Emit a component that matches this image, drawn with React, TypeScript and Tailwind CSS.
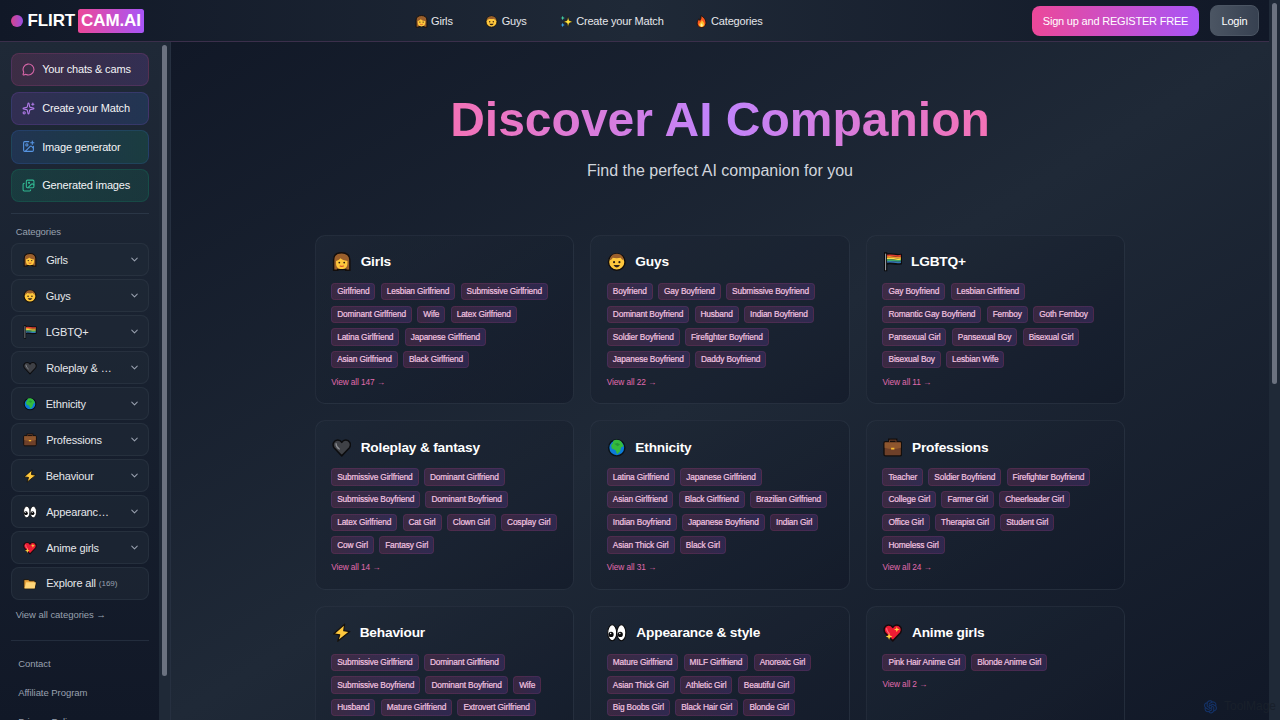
import React from 'react';
import { ChevronDown, ImagePlus, Images, MessageCircle, Sparkles } from 'lucide-react';
import { AiOutlineOpenAI } from 'react-icons/ai';

type Glyph =
  | 'woman' | 'man' | 'flag' | 'heart' | 'globe' | 'case' | 'bolt' | 'eyes' | 'sparkheart' | 'folder' | 'sparkles' | 'fire';

const drawings: Record<Glyph, React.ReactNode> = {
  woman: (
    <>
      <path d="M2 22.500V9.500C2 4 6 1 12 1s10 3 10 8.500v13h-5v-1H7v1Z" fill="#9a5f2c" stroke="#130e0c" strokeWidth="1.800" />
      <path d="M5 11c2-.4 4.500-1.700 5.500-3.200C12.300 9.400 15 10.800 19 11v3c0 5-3 7-7 7s-7-2-7-7Z" fill="#ffc83d" />
      <circle cx="9" cy="13" r="1.100" fill="#2a1a10" /><circle cx="15" cy="13" r="1.100" fill="#2a1a10" />
      <path d="M9.500 17q2.500 1.600 5 0" stroke="#d6502c" strokeWidth="1.500" fill="none" />
    </>
  ),
  man: (
    <>
      <circle cx="12" cy="12.300" r="10.200" fill="#ffc83d" stroke="#130e0c" strokeWidth="1.800" />
      <path d="M3.500 10C4 5 7 2.200 12 2.200S20 5 20.500 10c-2-.6-3-1.500-3.500-3-3 .8-7 .8-10 0C6.500 8.500 5.500 9.500 3.500 10Z" fill="#9a5f2c" />
      <circle cx="8.700" cy="12.500" r="1.300" fill="#2a1a10" /><circle cx="15.300" cy="12.500" r="1.300" fill="#2a1a10" />
      <path d="M8 16h8q-1.500 3-4 3t-4-3Z" fill="#33231a" />
    </>
  ),
  flag: (
    <>
      <path d="M2 1v22h2.500V15c4-2 10 1 18-.5V3C16 4.500 10 1 4.500 2.500V1Z" fill="#111" stroke="#0b0b0d" strokeWidth="1.500" />
      <path d="M5 4.300c6-1.500 10 1.700 17 .2" stroke="#e03c31" strokeWidth="2" fill="none" />
      <path d="M5 6.300c6-1.500 10 1.700 17 .2" stroke="#f7902d" strokeWidth="2" fill="none" />
      <path d="M5 8.300c6-1.500 10 1.700 17 .2" stroke="#f5df4d" strokeWidth="2" fill="none" />
      <path d="M5 10.300c6-1.500 10 1.700 17 .2" stroke="#3fa66b" strokeWidth="2" fill="none" />
      <path d="M5 12.300c6-1.500 10 1.700 17 .2" stroke="#3475b5" strokeWidth="2" fill="none" />
      <path d="M3.200 2v20.500" stroke="#a5aab2" strokeWidth="1.200" />
    </>
  ),
  heart: (
    <>
      <path d="M12 22 2.500 12C-.5 7 3 2.500 7 2.500c2.200 0 4 1.200 5 3 1-1.800 2.800-3 5-3 4 0 7.500 4.500 4.500 9.500Z" fill="#3f4146" stroke="#0c0c0e" strokeWidth="1.800" strokeLinejoin="round" />
      <path d="M5 7q0 4 4 6.500" stroke="#8b8d92" strokeWidth="1.600" fill="none" strokeLinecap="round" />
    </>
  ),
  globe: (
    <>
      <circle cx="12" cy="12" r="10" fill="#0d7bd8" stroke="#0b1116" strokeWidth="1.800" />
      <path d="M8 3c3-1.500 8-1 10 2l2.500 5-3 1.500-1.500 5-3.500 3.500-2-5-4.500-2-1-4 2-2.500Z" fill="#35bb3d" />
      <path d="m9 7 4-1 3 2-3 2Z" fill="#25983a" />
    </>
  ),
  case: (
    <>
      <path d="M8 5V2.500h8V5" fill="none" stroke="#130e0c" strokeWidth="3.500" />
      <rect x="1.200" y="4.500" width="21.600" height="17.500" rx="2" fill="#6e4029" stroke="#130e0c" strokeWidth="1.700" />
      <path d="M8 5V2.700h8V5" fill="none" stroke="#6e4029" strokeWidth="1.200" />
      <path d="M2 5.500h20V12q-10 3-20 0Z" fill="#8e562e" /><rect x="10" y="12" width="4" height="2.200" fill="#f7b92f" />
    </>
  ),
  bolt: <path d="M15.500 1.500 2 13.500l7.500 1L7 22.500 22 10.500 14.500 9.500Z" fill="#ffc83d" stroke="#15110d" strokeWidth="1.500" strokeLinejoin="round" />,
  eyes: (
    <>
      <ellipse cx="6.400" cy="12" rx="5.500" ry="9.800" fill="#fff" stroke="#08080a" strokeWidth="1.300" />
      <ellipse cx="17.700" cy="12" rx="5.500" ry="9.800" fill="#fff" stroke="#08080a" strokeWidth="1.300" />
      <circle cx="5" cy="14" r="3.200" fill="#09090b" /><circle cx="16.300" cy="14" r="3.200" fill="#09090b" />
      <circle cx="4.500" cy="12.800" r=".9" fill="#fff" /><circle cx="15.800" cy="12.800" r=".9" fill="#fff" />
    </>
  ),
  sparkheart: (
    <>
      <path d="M12 22 2.500 12C-.5 7 3 2.500 7 2.500c2.200 0 4 1.200 5 3 1-1.800 2.800-3 5-3 4 0 7.500 4.500 4.500 9.500Z" fill="#ec1c34" stroke="#160a0c" strokeWidth="1.800" strokeLinejoin="round" />
      <path d="M4.500 7q0 3 3 6" stroke="#ff6877" strokeWidth="1.600" fill="none" strokeLinecap="round" />
      <path d="m17 4.500.9 2.600 2.600.9-2.600.9L17 11.500l-.9-2.600-2.600-.9 2.600-.9ZM7.500 12.500l1.100 3 3 1.100-3 1.100-1.100 3-1.100-3-3-1.100 3-1.100Z" fill="#ffd23d" />
    </>
  ),
  folder: (
    <>
      <path d="M1.500 20V4.500h8L11 6.500h9.500V10h2L20.500 20Z" fill="#e9a33b" stroke="#15110d" strokeWidth="1.500" strokeLinejoin="round" />
      <path d="M2.500 19.500 5.500 9H22l-2 10.500Z" fill="#ffd679" />
    </>
  ),
  sparkles: (
    <>
      <path d="m15 3 2 7 6.500 2.500L17 15l-2 7-2-7-6.500-2.500L13 10Z" fill="#ffe23d" stroke="#15130d" strokeWidth="1" />
      <path d="m5 1.500 1.200 3L9 5.500 6.200 6.500 5 9.500l-1.200-3L1 5.500l2.800-1Z" fill="#46d4a5" />
      <path d="m5 14.500 1.200 3 2.800 1-2.800 1L5 22.500l-1.200-3-2.800-1 2.800-1Z" fill="#39a5e8" />
    </>
  ),
  fire: (
    <>
      <path d="M11 1c5 3 10 8 9 15-.7 4.500-4 7-8 7s-8-3-8-8c0-3.500 2-5 3-8l2 3c2-2.500 2.500-5 2-9Z" fill="#f9591f" stroke="#180d0a" strokeWidth="1.500" />
      <path d="M12.500 9c0 3-4 5-5 8 0 3.500 2 5 4.700 5s5-2 5-5-2.200-4-4.700-8Z" fill="#ffc12d" />
      <path d="M12 15q-2.500 3-2 4.500 1 2 2.200 2t2.300-1.500Q15 18 12 15Z" fill="#fff0a0" />
    </>
  ),
};

const Emoji = ({ name, className }: { name: Glyph; className: string }) => (
  <svg viewBox="0 0 24 24" className={`shrink-0 ${className}`} aria-hidden="true">{drawings[name]}</svg>
);

interface Category {
  title: string;
  icon: Glyph;
  slot: string;
  side: string;
  total: number;
  rows: string[][];
}

const categories: Category[] = [
  { title: 'Girls', icon: 'woman', slot: 'w-[29.500px]', side: 'w-[23px]', total: 147, rows: [['Girlfriend', 'Lesbian Girlfriend', 'Submissive Girlfriend'], ['Dominant Girlfriend', 'Wife', 'Latex Girlfriend'], ['Latina Girlfriend', 'Japanese Girlfriend'], ['Asian Girlfriend', 'Black Girlfriend']] },
  { title: 'Guys', icon: 'man', slot: 'w-[28.500px]', side: 'w-[22.500px]', total: 22, rows: [['Boyfriend', 'Gay Boyfriend', 'Submissive Boyfriend'], ['Dominant Boyfriend', 'Husband', 'Indian Boyfriend'], ['Soldier Boyfriend', 'Firefighter Boyfriend'], ['Japanese Boyfriend', 'Daddy Boyfriend']] },
  { title: 'LGBTQ+', icon: 'flag', slot: 'w-[28.500px]', side: 'w-[22.500px]', total: 11, rows: [['Gay Boyfriend', 'Lesbian Girlfriend'], ['Romantic Gay Boyfriend', 'Femboy', 'Goth Femboy'], ['Pansexual Girl', 'Pansexual Boy', 'Bisexual Girl'], ['Bisexual Boy', 'Lesbian Wife']] },
  { title: 'Roleplay & fantasy', icon: 'heart', slot: 'w-[29.500px]', side: 'w-[23px]', total: 14, rows: [['Submissive Girlfriend', 'Dominant Girlfriend'], ['Submissive Boyfriend', 'Dominant Boyfriend'], ['Latex Girlfriend', 'Cat Girl', 'Clown Girl', 'Cosplay Girl'], ['Cow Girl', 'Fantasy Girl']] },
  { title: 'Ethnicity', icon: 'globe', slot: 'w-[28.500px]', side: 'w-[22.500px]', total: 31, rows: [['Latina Girlfriend', 'Japanese Girlfriend'], ['Asian Girlfriend', 'Black Girlfriend', 'Brazilian Girlfriend'], ['Indian Boyfriend', 'Japanese Boyfriend', 'Indian Girl'], ['Asian Thick Girl', 'Black Girl']] },
  { title: 'Professions', icon: 'case', slot: 'w-[29.500px]', side: 'w-[23px]', total: 24, rows: [['Teacher', 'Soldier Boyfriend', 'Firefighter Boyfriend'], ['College Girl', 'Farmer Girl', 'Cheerleader Girl'], ['Office Girl', 'Therapist Girl', 'Student Girl'], ['Homeless Girl']] },
  { title: 'Behaviour', icon: 'bolt', slot: 'w-[28.500px]', side: 'w-[22.500px]', total: 16, rows: [['Submissive Girlfriend', 'Dominant Girlfriend'], ['Submissive Boyfriend', 'Dominant Boyfriend', 'Wife'], ['Husband', 'Mature Girlfriend', 'Extrovert Girlfriend']] },
  { title: 'Appearance & style', icon: 'eyes', slot: 'w-[29.500px]', side: 'w-[23px]', total: 40, rows: [['Mature Girlfriend', 'MILF Girlfriend', 'Anorexic Girl'], ['Asian Thick Girl', 'Athletic Girl', 'Beautiful Girl'], ['Big Boobs Girl', 'Black Hair Girl', 'Blonde Girl']] },
  { title: 'Anime girls', icon: 'sparkheart', slot: 'w-[29.500px]', side: 'w-[23px]', total: 2, rows: [['Pink Hair Anime Girl', 'Blonde Anime Girl']] },
];

const actions = [
  { label: 'Your chats & cams', Icon: MessageCircle, box: 'from-[#ec4899]/15 to-[#a855f7]/15 border-[#ec4899]/15', tint: 'text-[#d866a8]' },
  { label: 'Create your Match', Icon: Sparkles, box: 'from-[#a855f7]/15 to-[#3b82f6]/15 border-[#a855f7]/15', tint: 'text-[#b07ae8]' },
  { label: 'Image generator', Icon: ImagePlus, box: 'from-[#3b82f6]/15 to-[#10b981]/15 border-[#3b82f6]/15', tint: 'text-[#5795e2]' },
  { label: 'Generated images', Icon: Images, box: 'from-[#10b981]/15 to-[#10b981]/12 border-[#10b981]/15', tint: 'text-[#31b892]' },
];

const links: { label: string; icon: Glyph; spacing: string }[] = [
  { label: 'Girls', icon: 'woman', spacing: 'mr-[32.500px]' },
  { label: 'Guys', icon: 'man', spacing: 'mr-[33px]' },
  { label: 'Create your Match', icon: 'sparkles', spacing: 'mr-[31px]' },
  { label: 'Categories', icon: 'fire', spacing: '' },
];

const Header = () => (
  <header className="flex h-[42px] shrink-0 items-center border-b border-[#3b2f4b] bg-linear-to-r/srgb from-[#111827] via-[#1f2937] to-[#111827]">
    <div className="flex w-[414.500px] items-center pl-[11px]">
      <span className="size-3 rounded-full bg-linear-to-r/srgb from-[#ec4899] to-[#a855f7] opacity-90" />
      <span className="ml-[4.500px] w-[50.500px] text-[17px] tracking-[-0.1px] font-bold text-white">FLIRT</span>
      <span className="flex h-6 w-[66px] items-center justify-center rounded-[2.500px] bg-linear-to-r/srgb from-[#ec4899] to-[#a855f7] text-[17px] tracking-[-0.1px] font-bold text-white">CAM.AI</span>
    </div>
    <nav className="flex grow items-center pt-px text-[11px] tracking-[-0.18px] text-gray-200">
      {links.map((l) => (
        <a key={l.label} className={`flex items-center gap-[3.500px] ${l.spacing}`}>
          <Emoji name={l.icon} className="size-[13px]" />
          {l.label}
        </a>
      ))}
    </nav>
    <div className="flex items-center gap-[11px] pr-[10px] text-[11px] tracking-[-0.2px] text-white">
      <button className="h-[30px] w-[167px] rounded-lg bg-linear-to-r/srgb from-[#ec4899] to-[#a855f7] pt-px">Sign up and REGISTER FREE</button>
      <button className="h-[31px] w-[49px] rounded-lg border border-[#4b5563] bg-linear-to-r/srgb from-[#4b5563] to-[#374151] pt-px">Login</button>
    </div>
  </header>
);

const Sidebar = () => (
  <aside className="flex w-[171px] shrink-0 overflow-hidden bg-linear-to-b/srgb from-[#1f2937] to-[#111827]">
    <div className="w-[159px] shrink-0 pt-[11px] pr-[10.330px] pl-[10.670px]">
      <div className="flex flex-col gap-[5.330px]">
        {actions.map(({ label, Icon, box, tint }) => (
          <button key={label} className={`flex h-[33.330px] items-center gap-[7.500px] rounded-lg border bg-linear-to-r/srgb px-[10px] text-[11px] tracking-[-0.16px] text-gray-100 ${box}`}>
            <Icon className={`size-[13px] ${tint}`} strokeWidth={2} />
            {label}
          </button>
        ))}
      </div>
      <div className="mt-[10.700px] border-t border-[#2a3646]" />
      <p className="mt-[11px] mb-[4px] pl-[5px] text-[9.500px] leading-[14px] tracking-[-0.080px] text-gray-400">Categories</p>
      <div className="flex flex-col gap-[2.670px]">
        {categories.map((c) => (
          <button key={c.title} className="flex h-[33.330px] items-center rounded-lg border border-[#374151]/40 bg-[#1f2937]/60 pl-[11.500px] text-[11px] tracking-[-0.16px] text-gray-200">
            <span className={`shrink-0 ${c.side}`}><Emoji name={c.icon} className="size-[14px]" /></span>
            <span className="w-[67px] truncate text-left leading-4">{c.title}</span>
            <ChevronDown className="ml-auto mr-[7.500px] size-[11px] text-gray-400" strokeWidth={2.200} />
          </button>
        ))}
        <button className="flex h-[33.330px] items-center rounded-lg border border-[#374151]/40 bg-[#1f2937]/60 pl-[11.500px] text-[11px] tracking-[-0.16px] text-gray-200">
          <span className="w-[23px] shrink-0"><Emoji name="folder" className="size-[14px]" /></span>
          Explore all <span className="ml-[3px] pt-px text-[8px] tracking-normal text-gray-400">(169)</span>
        </button>
      </div>
      <a className="mt-[8px] block pl-[5px] text-[9.500px] leading-[14px] tracking-[-0.050px] text-gray-400">View all categories →</a>
      <div className="mt-[18px] border-t border-[#232d3d]" />
      <div className="mt-[8px] flex flex-col pl-[7.500px] text-[9.500px] leading-[29px] tracking-[-0.050px] whitespace-nowrap text-gray-400">
        <a>Contact</a>
        <a>Affiliate Program</a>
        <a>Privacy Policy</a>
      </div>
    </div>
    <div className="w-3 shrink-0 border-r border-[#263040] bg-[#1f2937] pt-[3px] pl-[3px]">
      <div className="h-[631px] w-[5px] rounded-full bg-[#6b7280]" />
    </div>
  </aside>
);

const Card = ({ c }: { c: Category }) => (
  <section className="flex flex-col items-start rounded-[10px] border border-[#374151]/40 bg-linear-to-br/srgb from-[#1f2937]/60 to-[#111827]/60 pt-4 pl-[15.670px]">
    <h2 className="flex h-5 items-center text-[13.700px] tracking-[-0.18px] font-bold text-white">
      <span className={`pl-[0.500px] ${c.slot}`}><Emoji name={c.icon} className="size-[19.500px]" /></span>
      <span className="pt-px">{c.title}</span>
    </h2>
    <div className="mt-[11px] flex flex-col gap-[5.330px]">
      {c.rows.map((row) => (
        <div key={row[0]} className="flex gap-[5.330px]">
          {row.map((t) => (
            <span key={t} className="flex h-[17.330px] items-center rounded border border-[#ec4899]/12 bg-linear-to-r/srgb from-[#ec4899]/16 to-[#a855f7]/16 px-[5px] text-[8.300px] tracking-[-0.140px] whitespace-nowrap text-[#f3c4e0] [-webkit-text-stroke:0.2px]">{t}</span>
          ))}
        </div>
      ))}
    </div>
    <a className="mt-[8.500px] text-[8.300px] leading-[11px] tracking-[-0.1px] text-[#e06bae]">View all {c.total} →</a>
  </section>
);

export default function App() {
  return (
    <div className="relative flex h-[720px] w-[1280px] overflow-hidden bg-[#1f2937] font-['Liberation_Sans',Arial,sans-serif]">
      <div className="flex w-[1269px] shrink-0 flex-col">
        <Header />
        <div className="flex min-h-0 grow">
          <Sidebar />
          <main className="grow overflow-hidden bg-linear-to-br/srgb from-[#111827] via-[#1f2937] to-[#111827]">
            <div className="mx-auto w-[811px]">
              <h1 className="mt-[50px] h-[56px] text-center">
                <span className="inline-block bg-linear-to-r/srgb from-[#f472b6] via-[#c084fc] to-[#f472b6] bg-clip-text text-[48px] leading-[56px] font-bold text-transparent">Discover AI Companion</span>
              </h1>
              <p className="mt-[12px] text-center text-[16px] leading-[22px] text-gray-300">Find the perfect AI companion for you</p>
              <div className="mt-[53px] grid auto-rows-[169.330px] grid-cols-3 gap-4">
                {categories.map((c) => <Card key={c.title} c={c} />)}
              </div>
            </div>
          </main>
        </div>
      </div>
      <div className="grow pt-[3px] pl-[3px]">
        <div className="h-[381px] w-[5px] rounded-full bg-[#6b7280]" />
      </div>
      <div className="absolute right-[4px] bottom-[5px] flex items-center gap-[5px] text-[12px] text-[#19202b]">
        <AiOutlineOpenAI className="size-[17px] text-[#14336a]" />
        ToolMage
      </div>
    </div>
  );
}
